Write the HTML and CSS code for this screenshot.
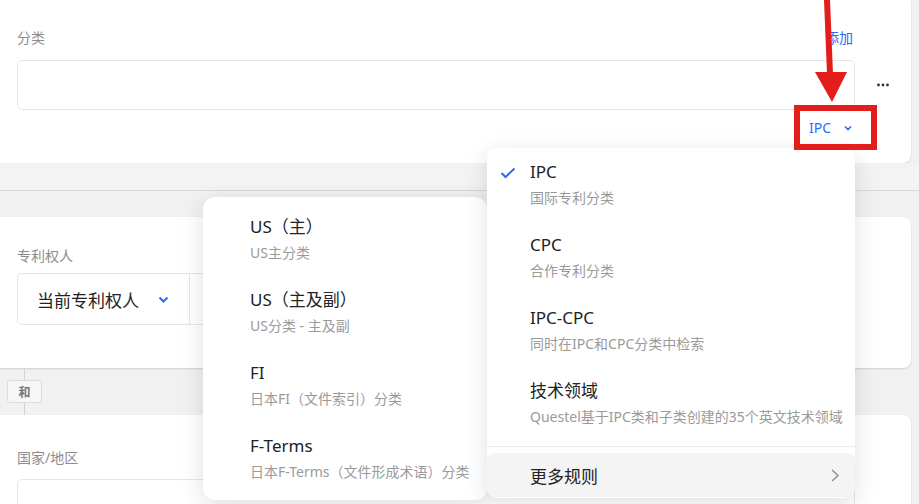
FILE: index.html
```html
<!DOCTYPE html>
<html lang="zh-CN">
<head>
    <meta charset="UTF-8">
    <title>分类</title>
    <link rel="stylesheet" href="styles.css">
</head>
<body>
    <div class="page">
        <!-- 分类 -->
        <section class="card card-top">
            <div class="field">
                <div class="field-head">
                    <span class="label">分类</span>
                    <a class="link">添加</a>
                </div>
                <div class="field-row">
                    <div class="input"></div>
                    <span class="more">
                        <svg width="12" height="4" viewBox="0 0 12 4"><circle cx="1.5" cy="2" r="1.4"/><circle cx="6" cy="2" r="1.4"/><circle cx="10.5" cy="2" r="1.4"/></svg>
                    </span>
                </div>
                <div class="field-foot">
                    <span class="scheme">IPC
                        <svg width="8" height="6" viewBox="0 0 8 6"><path d="M1 1.5 L4 4.5 L7 1.5" /></svg>
                    </span>
                </div>
            </div>
        </section>

        <div class="gap gap-split"></div>

        <!-- 专利权人 -->
        <section class="card card-mid">
            <span class="label">专利权人</span>
            <div class="select-group">
                <div class="select">当前专利权人
                    <svg width="11" height="7" viewBox="0 0 11 7"><path d="M1.5 1.5 L5.5 5.5 L9.5 1.5" /></svg>
                </div>
                <div class="select-rest"></div>
            </div>
        </section>

        <div class="gap connector">
            <span class="badge">和</span>
        </div>

        <!-- 国家/地区 -->
        <section class="card card-bottom">
            <span class="label">国家/地区</span>
            <div class="input"></div>
        </section>

        <!-- 更多规则 子菜单 -->
        <div class="menu menu-us">
            <div class="menu-item">
                <div class="item-title">US（主）</div>
                <div class="item-sub">US主分类</div>
            </div>
            <div class="menu-item">
                <div class="item-title">US（主及副）</div>
                <div class="item-sub">US分类 - 主及副</div>
            </div>
            <div class="menu-item">
                <div class="item-title">FI</div>
                <div class="item-sub">日本FI（文件索引）分类</div>
            </div>
            <div class="menu-item">
                <div class="item-title">F-Terms</div>
                <div class="item-sub">日本F-Terms（文件形成术语）分类</div>
            </div>
        </div>

        <!-- 分类体系菜单 -->
        <div class="menu menu-ipc">
            <div class="menu-item active">
                <svg class="check" width="16" height="12" viewBox="0 0 16 12"><path d="M1.5 6 L5.5 10 L14.5 1.5" /></svg>
                <div class="item-title">IPC</div>
                <div class="item-sub">国际专利分类</div>
            </div>
            <div class="menu-item">
                <div class="item-title">CPC</div>
                <div class="item-sub">合作专利分类</div>
            </div>
            <div class="menu-item">
                <div class="item-title">IPC-CPC</div>
                <div class="item-sub">同时在IPC和CPC分类中检索</div>
            </div>
            <div class="menu-item">
                <div class="item-title">技术领域</div>
                <div class="item-sub">Questel基于IPC类和子类创建的35个英文技术领域</div>
            </div>
            <div class="menu-sep"></div>
            <div class="menu-more">
                <span>更多规则</span>
                <svg width="10" height="13" viewBox="0 0 10 13"><path d="M2 1 L8 6.5 L2 12" /></svg>
            </div>
        </div>

        <!-- 标注 -->
        <svg class="annot-arrow" width="40" height="104" viewBox="0 0 40 104">
            <polygon points="14,0 20,0 23,74 17,74" />
            <polygon points="5,72 37,72 22,102" />
        </svg>
        <div class="annot-box"></div>
    </div>
</body>
</html>
```

FILE: styles.css
```css
body, html {
    margin: 0;
    padding: 0;
    width: 919px;
    height: 504px;
    overflow: hidden;
    background-color: #f1f1f1;
    font-family: 'Noto Sans', 'Noto Sans CJK SC', sans-serif;
}
.page {
    position: relative;
    display: flex;
    flex-direction: column;
    width: 919px;
    height: 504px;
}
.card {
    background-color: #fff;
    margin-right: 8px;
    padding-left: 17px;
    display: flex;
    flex-direction: column;
    box-shadow: 0 1px 2px rgba(0, 0, 0, 0.14);
    flex-shrink: 0;
}
.label {
    font-size: 14px;
    line-height: 22px;
    color: #8c8c8c;
}
.input {
    height: 50px;
    border: 1px solid #e6e6e6;
    border-radius: 5px;
    box-sizing: border-box;
    background-color: #fff;
}

/* 分类 */
.card-top {
    border-radius: 0 0 8px 0;
    padding-top: 27px;
    padding-bottom: 24px;
}
.field {
    width: 838px;
}
.field-head {
    display: flex;
    justify-content: space-between;
    align-items: center;
    padding-right: 2px;
}
.link {
    font-size: 14px;
    line-height: 22px;
    color: #2a6cf6;
}
.field-row {
    display: flex;
    margin-top: 11px;
}
.field-row .input {
    width: 838px;
    flex-shrink: 0;
}
.more {
    width: 56px;
    flex-shrink: 0;
    display: flex;
    justify-content: center;
    align-items: center;
}
.more svg {
    fill: #333;
}
.field-foot {
    display: flex;
    justify-content: flex-end;
    margin-top: 7px;
    padding-right: 3px;
}
.scheme {
    display: flex;
    align-items: center;
    gap: 13px;
    font-size: 14px;
    line-height: 22px;
    color: #2a6cf6;
}
.scheme svg path {
    fill: none;
    stroke: #2a6cf6;
    stroke-width: 1.6;
}

.gap {
    flex-shrink: 0;
}
.gap-split {
    height: 27px;
    border-bottom: 1px solid #d9d9d9;
    margin-bottom: 26px;
    background-color: #f3f3f3;
}

/* 专利权人 */
.card-mid {
    border-radius: 0 8px 8px 0;
    padding-top: 28px;
    padding-bottom: 43px;
}
.select-group {
    display: flex;
    width: 838px;
    height: 52px;
    margin-top: 6px;
    border: 1px solid #e6e6e6;
    border-radius: 5px;
    box-sizing: border-box;
}
.select {
    width: 172px;
    display: flex;
    align-items: center;
    gap: 19px;
    padding-left: 19px;
    box-sizing: border-box;
    border-right: 1px solid #e6e6e6;
    font-size: 17px;
    color: #222;
}
.select svg path {
    fill: none;
    stroke: #2a6cf6;
    stroke-width: 2;
}
.select-rest {
    flex-grow: 1;
}

.connector {
    height: 47px;
    position: relative;
    display: flex;
    align-items: center;
    padding-left: 7px;
}
.connector::before {
    content: '';
    position: absolute;
    left: 24px;
    top: 0;
    bottom: 0;
    border-left: 1px solid #d4d4d4;
}
.badge {
    position: relative;
    width: 35px;
    height: 23px;
    box-sizing: border-box;
    border: 1px solid #dcdcdc;
    border-radius: 3px;
    background-color: #f6f6f6;
    font-size: 12px;
    font-weight: bold;
    color: #777;
    display: flex;
    justify-content: center;
    align-items: center;
}

/* 国家/地区 */
.card-bottom {
    border-radius: 0 8px 0 0;
    padding-top: 32px;
    flex-grow: 1;
}
.card-bottom .input {
    width: 838px;
    margin-top: 10px;
}

/* 菜单 */
.menu {
    position: absolute;
    background-color: #fff;
    box-sizing: border-box;
    box-shadow: 0 6px 24px rgba(0, 0, 0, 0.13);
    overflow: hidden;
}
.menu-item {
    position: relative;
    padding-top: 12px;
    height: 73px;
    box-sizing: border-box;
}
.item-title {
    font-size: 17px;
    line-height: 24px;
    color: #222;
}
.item-sub {
    font-size: 14px;
    line-height: 20px;
    margin-top: 4px;
    color: #9a9a9a;
    white-space: nowrap;
}
.menu-us {
    left: 203px;
    top: 197px;
    width: 284px;
    height: 303px;
    border-radius: 12px;
    padding-top: 6px;
}
.menu-us .menu-item {
    padding-left: 47px;
}
.menu-ipc {
    left: 487px;
    top: 148px;
    width: 368px;
    height: 350px;
    border-radius: 10px;
}
.menu-ipc .menu-item {
    padding-left: 43px;
}
.check {
    position: absolute;
    left: 13px;
    top: 19px;
}
.check path {
    fill: none;
    stroke: #2a6cf6;
    stroke-width: 2;
}
.menu-sep {
    margin-top: 6px;
    border-top: 1px solid #ececec;
}
.menu-more {
    margin-top: 6px;
    height: 44px;
    border-radius: 8px;
    background-color: #f4f4f4;
    display: flex;
    justify-content: space-between;
    align-items: center;
    padding: 0 15px 0 43px;
    font-size: 17px;
    color: #222;
}
.menu-more svg path {
    fill: none;
    stroke: #888;
    stroke-width: 1.3;
}

/* 标注 */
.annot-arrow {
    position: absolute;
    left: 810px;
    top: 0;
    fill: #e31c1c;
}
.annot-box {
    position: absolute;
    left: 794px;
    top: 105px;
    width: 83px;
    height: 45px;
    box-sizing: border-box;
    border: 6px solid #e31c1c;
}
```
